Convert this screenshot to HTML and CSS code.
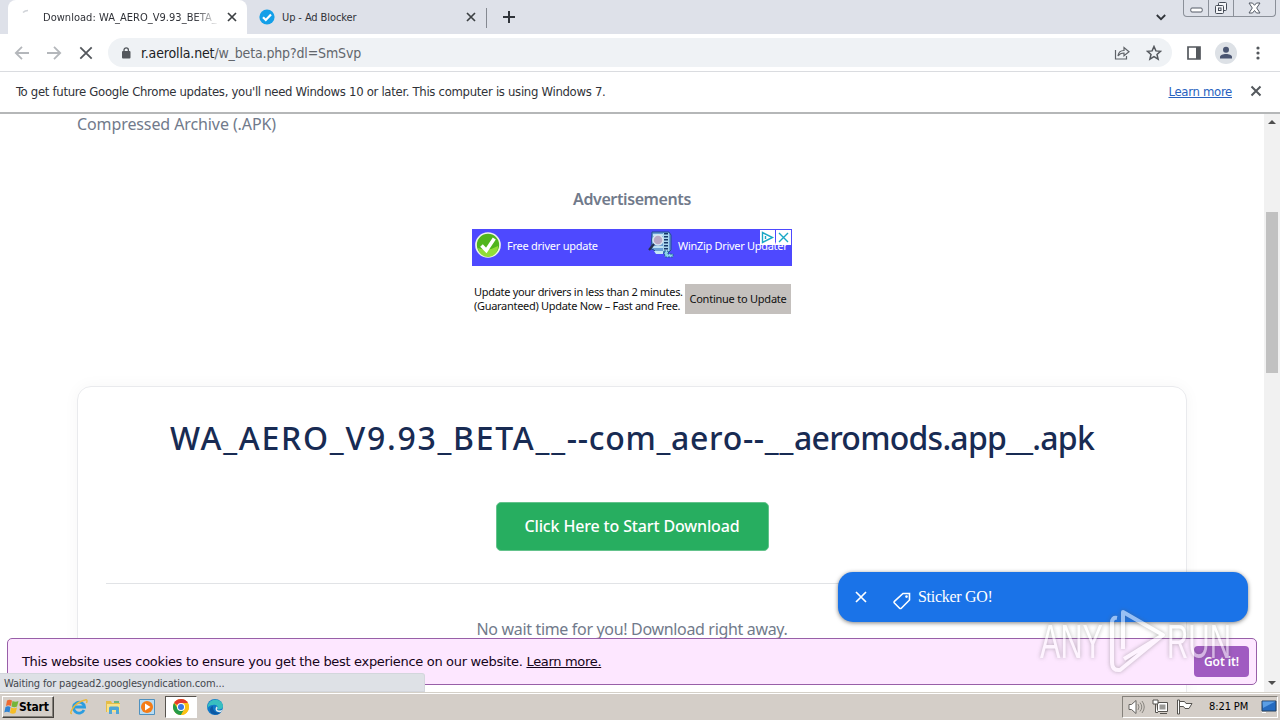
FILE: index.html
```html
<!DOCTYPE html>
<html lang="en">
<head>
    <meta charset="UTF-8">
    <title>Download: WA_AERO_V9.93_BETA__</title>
    <link rel="stylesheet" href="styles.css">
</head>
<body>

    <!-- Tabs -->
    <div class="tabstrip">
        <div class="tab active">
            <svg class="spinner" width="16" height="16" viewBox="0 0 16 16" fill="none" stroke="#d0d3d8" stroke-width="1.5"><path d="M3 3.5Q5 1.5 8 1.5"/></svg>
            <span class="tab-title fade">Download: WA_AERO_V9.93_BETA_</span>
            <svg width="10" height="10" viewBox="0 0 10 10" stroke="#3c4043" stroke-width="1.7"><path d="M1 1l8 8M9 1l-8 8"/></svg>
        </div>
        <div class="tab">
            <svg width="16" height="16" viewBox="0 0 16 16"><circle cx="8" cy="8" r="7.6" fill="#139fe8"/><path d="M4 8.2l2.8 2.8L12 5.5" fill="none" stroke="#fff" stroke-width="2.2"/></svg>
            <span class="tab-title">Up - Ad Blocker</span>
            <svg width="10" height="10" viewBox="0 0 10 10" stroke="#3c4043" stroke-width="1.7"><path d="M1 1l8 8M9 1l-8 8"/></svg>
        </div>
        <div class="tab-sep"></div>
        <svg class="new-tab" width="12" height="12" viewBox="0 0 12 12" stroke="#30343a" stroke-width="2"><path d="M6 0v12M0 6h12"/></svg>
        <svg class="tab-search" width="10" height="7" viewBox="0 0 10 7" fill="none" stroke="#30343a" stroke-width="1.8"><path d="M.8 1L5 5.2 9.2 1"/></svg>
        <div class="win-buttons">
            <span><svg width="13" height="6" viewBox="0 0 13 6"><rect x=".8" y="1" width="11.4" height="4" rx="1.2" fill="#fff" stroke="#555b66"/></svg></span>
            <span><svg width="14" height="14" viewBox="0 0 14 14" fill="#f4f5f8" stroke="#454b56"><rect x="4.5" y="1.5" width="8" height="8" rx="1"/><rect x="1.5" y="4.5" width="8" height="8" rx="1"/><rect x="4.5" y="7" width="2.5" height="2.5"/></svg></span>
            <span class="win-close"><svg width="13" height="12" viewBox="0 0 13 12"><path d="M1 1h3.5l2 2.3 2-2.3H12L8.7 6l3.3 5H8.5l-2-2.5-2 2.5H1l3.3-5z" fill="#fff" stroke="#555b66"/></svg></span>
        </div>
    </div>

    <!-- Toolbar -->
    <div class="toolbar">
        <svg width="16" height="16" viewBox="0 0 16 16" fill="none" stroke="#b4b7bb" stroke-width="1.8"><path d="M15 8H2M8 1.8L1.8 8 8 14.2"/></svg>
        <svg width="16" height="16" viewBox="0 0 16 16" fill="none" stroke="#b4b7bb" stroke-width="1.8"><path d="M1 8h13M8 1.8L14.2 8 8 14.2"/></svg>
        <svg width="16" height="16" viewBox="0 0 16 16" fill="none" stroke="#53575c" stroke-width="1.8"><path d="M2.3 2.3l11.4 11.4M13.7 2.3L2.3 13.7"/></svg>
        <div class="omnibox">
            <svg width="10" height="12" viewBox="0 0 10 12"><rect x="1" y="4" width="8.5" height="7.5" rx="1" fill="#54585d"/><path d="M3 5V3a2.2 2.2 0 014.4 0v2" fill="none" stroke="#54585d" stroke-width="1.3"/></svg>
            <span class="url"><b>r.aerolla.net</b>/w_beta.php?dl=SmSvp</span>
            <svg class="share" width="16" height="16" viewBox="0 0 16 16" fill="none" stroke="#5f6368" stroke-width="1.2"><path d="M1.5 5v9h11v-3M4 11q.5-5.5 6-5.5V2.5L15 6.700l-5 4V8Q6 8 4 11z"/></svg>
            <svg width="16" height="16" viewBox="0 0 16 16" fill="none" stroke="#54585d" stroke-width="1.5"><path d="M8 1.5l1.9 4.4 4.6.4L11 9.4l1.1 4.7L8 11.6l-4.1 2.5L5 9.4 1.5 6.3l4.6-.4z"/></svg>
        </div>
        <svg class="panel" width="14" height="14" viewBox="0 0 14 14"><path d="M1 1h12v12H1z" fill="none" stroke="#54585d" stroke-width="1.7"/><path d="M9 1h4v12H9z" fill="#54585d"/></svg>
        <svg class="avatar" width="22" height="22" viewBox="0 0 22 22"><circle cx="11" cy="11" r="11" fill="#dde1e6"/><circle cx="11" cy="7.8" r="3" fill="#4a5571"/><path d="M5 16.5v-1.5c0-4 12-4 12 0v1.5z" fill="#4a5571"/></svg>
        <svg class="dots" width="4" height="14" viewBox="0 0 4 14" fill="#54585d"><circle cx="2" cy="2" r="1.6"/><circle cx="2" cy="7" r="1.6"/><circle cx="2" cy="12" r="1.6"/></svg>
    </div>

    <!-- Update notice -->
    <div class="infobar">
        <span class="infobar-text">To get future Google Chrome updates, you'll need Windows 10 or later. This computer is using Windows 7.</span>
        <a class="infobar-link">Learn more</a>
        <svg width="12" height="12" viewBox="0 0 12 12" stroke="#54585d" stroke-width="2"><path d="M1.5 1.5l9 9M10.5 1.5l-9 9"/></svg>
    </div>

    <div class="viewport">
        <div class="page">
            <p class="filetype"><span>Compressed Archive (.APK)</span></p>
            <p class="ad-label"><span>Advertisements</span></p>
            <div class="ad">
                <div class="ad-top">
                    <svg width="28" height="28" viewBox="0 0 28 28"><circle cx="14" cy="14" r="12" fill="#50b51d" stroke="#eef4ea" stroke-width="1.7"/><path d="M4 17q10 4 20-2a10 10 0 01-20 2z" fill="#91dd38"/><path d="M7.5 14.5l4.8 5 8-12" fill="none" stroke="#fff" stroke-width="3.6"/></svg>
                    <span class="ad-free">Free driver update</span>
                    <svg class="winzip" width="28" height="28" viewBox="0 0 28 28"><path d="M5 1h17l2 3v15l-3 3H10l-3-3-3-1z" fill="#6a9ed4" stroke="#234d91"/><path d="M6 4h14M6 16h14" stroke="#bfe2f3" stroke-width="2"/><path d="M16 2h6v18h-6z" fill="#a9d6ef"/><path d="M19 2v20" stroke="#173768" stroke-width="4" stroke-dasharray="1.5 1.5"/><circle cx="11" cy="9" r="5" fill="#b8a7c4" stroke="#d9e5ee" stroke-width="1.5"/><path d="M7 13l-5 6" stroke="#26304f" stroke-width="2.2"/><path d="M7 20h9v3H9z" fill="#c4e7f6"/><path d="M17 20h4v3h5v3h-8z" fill="#8dd4e9" stroke="#2361a0" stroke-dasharray="2 1"/></svg>
                    <span class="ad-name">WinZip Driver Updater</span>
                    <div class="adchoices">
                        <svg width="15" height="15" viewBox="0 0 15 15"><path d="M0 0h15v15H0z" fill="#fff"/><path d="M2.5 2.5v10l10-5zM5.5 6v3" fill="none" stroke="#18a7c5" stroke-width="1.4"/></svg>
                        <svg width="15" height="15" viewBox="0 0 15 15"><path d="M0 0h15v15H0z" fill="#fff"/><path d="M3 3l9 9M12 3l-9 9" stroke="#18a7c5" stroke-width="1.4"/></svg>
                    </div>
                </div>
                <div class="ad-bottom">
                    <div class="ad-copy"><span>Update your drivers in less than 2 minutes.</span><br><span>(Guaranteed) Update Now – Fast and Free.</span></div>
                    <div class="ad-button"><span>Continue to Update</span></div>
                </div>
            </div>
            <div class="card">
                <h1><span class="name-version">WA_AERO_V9.93_BETA__</span><span>--com_aero--__</span><span class="name-site">aeromods.app__.apk</span></h1>
                <div class="download-btn"><span>Click Here to Start Download</span></div>
                <hr>
                <p class="wait"><span>No wait time for you! Download right away.</span></p>
            </div>

            <!-- Overlays -->
            <div class="cookie">
                <p><span class="cookie-text">This website uses cookies to ensure you get the best experience on our website.</span><a>Learn more.</a></p>
                <div class="got-it"><span>Got it!</span></div>
            </div>
            <div class="sticker">
                <svg width="12" height="12" viewBox="0 0 12 12" stroke="#fff" stroke-width="1.7"><path d="M1 1l10 10M11 1L1 11"/></svg>
                <svg class="tag" width="18" height="18" viewBox="0 0 18 18"><path d="M10 1.5h6.5V8L8.3 16.2a1.2 1.2 0 01-1.7 0L1.4 11a1.2 1.2 0 010-1.7z" fill="none" stroke="#fff" stroke-width="1.6"/><circle cx="13.5" cy="4.6" r="1.3" fill="#fff"/></svg>
                <span>Sticker GO!</span>
            </div>
            <div class="status"><span>Waiting for pagead2.googlesyndication.com...</span></div>
        </div>
        <div class="scrollbar">
            <i class="up"></i>
            <div class="thumb"></div>
            <i class="down"></i>
        </div>
    </div>

    <!-- Taskbar -->
    <div class="taskbar">
        <div class="start">
            <svg width="15" height="16" viewBox="0 0 15 16"><path d="M3 1.5q2.500-1.500 5 0L7 7q-2.500-1.300-5 0z" fill="#ee6a31"/><path d="M8.500 2q3 1.500 6 0L13 7.500q-2.500 1.500-5.500 0z" fill="#76b53a"/><path d="M1.500 8q2.500-1.300 5 0l-1 5.500q-2.500-1.500-5.200 0z" fill="#2f83d3"/><path d="M7 8.500q3 1.500 6 0L11.500 14q-2.500 1.500-5.500 0z" fill="#f6bd27"/></svg>
            <b>Start</b>
        </div>
        <div class="quick">
            <span><svg width="18" height="18" viewBox="0 0 18 18" fill="none"><path d="M14 12a5.500 5.500 0 11.500-3H5" stroke="#2b9de0" stroke-width="2.8"/><path d="M2 15.500Q-1 16 3 10T15 2q3-1 1.500 3" stroke="#e9b83b" stroke-width="1.4"/></svg></span>
            <span><svg width="17" height="16" viewBox="0 0 17 16"><path d="M1 2h5l1 2h8v9H1z" fill="#e5bd48"/><path d="M2 5h13v8H2z" fill="#f9e28a"/><path d="M4 15V9q0-1.500 1.500-1.500h7Q14 7.500 14 9v6h-3v-4H7v4z" fill="#4fa6d6"/><path d="M9 3h5" stroke="#4bad6b" stroke-width="1.5"/></svg></span>
            <span><svg width="16" height="16" viewBox="0 0 16 16"><path d="M.5.5h15v15H.5z" fill="#b8dcf3" stroke="#4f91bf"/><circle cx="8" cy="8" r="6" fill="#f47c16"/><path d="M6 4.500v7L11.500 8z" fill="#fff"/></svg></span>
            <span class="current"><svg width="16" height="16" viewBox="0 0 16 16"><circle cx="8" cy="8" r="8" fill="#fbc116"/><path d="M8 8L1.070 4A8 8 0 0114.930 4z" fill="#e33b2e"/><path d="M1.070 4A8 8 0 008 16l3.500-6H5z" fill="#259b48"/><path d="M8 4h6.930A8 8 0 018 16l3.500-6z" fill="#fbc116"/><circle cx="8" cy="8" r="4" fill="#fff"/><circle cx="8" cy="8" r="3" fill="#3978e6"/></svg></span>
            <span><svg width="16" height="16" viewBox="0 0 16 16"><circle cx="8" cy="8" r="8" fill="#1178c8"/><path d="M1 6C3-1 15-1 16 7c0 4-5 4-6 3 2-3-1-5-4-4-3 0-5 2-6 4z" fill="#38bfc0"/><path d="M6 7c-1 5 4 8 8 6-2 3-6 3-8 2C2 14 2 8 6 7z" fill="#0c59a4"/><path d="M9.500 7.500c2 1 .5 2 .5 3 1 1.500 4 1.500 6-.5l-2 3c-4 1-7-2-4.500-5.500z" fill="#e2edf0"/></svg></span>
        </div>
        <div class="tray">
            <svg width="17" height="16" viewBox="0 0 17 16" fill="#fff" stroke="#65635f"><path d="M1 5.500h2.500L8 1.500v13l-4.500-4H1z"/><path d="M10 5q2 3 0 6M12 3.500q3.500 4.500 0 9M14 2q4.500 6 0 12" fill="none" stroke="#88857f"/></svg>
            <svg width="17" height="16" viewBox="0 0 17 16" fill="#fff" stroke="#55534f"><path d="M5.500 3.500h10v9h-10z"/><path d="M7.500 5.500h6v5h-6z" fill="#9a9996" stroke="none"/><path d="M8 14.500h7M1 1h5v4H1zM3.500 5v8.500H6"/></svg>
            <svg width="17" height="16" viewBox="0 0 17 16" fill="#fff" stroke="#55534f"><path d="M1.500 1v14h2V1zM3.500 2.500h5L10 4.500h6l-3 5H9l-1.500-2h-4z"/></svg>
            <span class="clock">8:21 PM</span>
            <svg width="16" height="14" viewBox="0 0 16 14"><path d="M1 1h14v10H1z" fill="#256bc0" stroke="#24405f"/><path d="M1.500 1.500h13L2 8z" fill="#5a9ee5"/><path d="M1 12.500h4" stroke="#fff"/></svg>
        </div>
    </div>

    <!-- Watermark above everything -->
    <svg class="watermark" width="210" height="72" viewBox="0 0 210 72">
        <g fill="#fff" font-family="Liberation Sans" font-size="49">
            <text x="6" y="52" textLength="63" lengthAdjust="spacingAndGlyphs">ANY</text>
            <text x="133" y="52" textLength="64" lengthAdjust="spacingAndGlyphs">RUN</text>
        </g>
        <g fill="none" stroke="#fff" stroke-width="4" stroke-linejoin="round">
            <path d="M89 43V6l40 23-39 24M83 12q-5-1-5 5v39q0 9 8 8l43-35"/>
        </g>
    </svg>

</body>
</html>
```
FILE: styles.css
```css
* {
    box-sizing: border-box;
}

body {
    font-family: "DejaVu Sans Condensed", "DejaVu Sans", sans-serif;
    font-size: 11px;
    width: 1280px;
    height: 720px;
    margin: 0;
    display: flex;
    flex-direction: column;
    overflow: hidden;
    position: relative;
    background-color: white;
    color: #303238;
}

svg {
    display: block;
    flex: none;
}

p, h1 {
    margin: 0;
    font-weight: normal;
}

span, a, b {
    white-space: nowrap;
}

/* Browser window */
.tabstrip {
    height: 34px;
    flex: none;
    display: flex;
    background-color: #dee1e9;
    padding-left: 8px;
}

.tab {
    width: 239px;
    height: 34px;
    display: flex;
    align-items: center;
    gap: 7px;
    padding: 0 10px 0 12px;
    letter-spacing: -0.1px;
}

.tab.active {
    background-color: white;
    border-radius: 8px 8px 0 0;
    letter-spacing: 0.03px;
}

.tab-title {
    flex: 1;
    overflow: hidden;
}

.fade {
    -webkit-mask-image: linear-gradient(90deg, #000 85%, transparent);
    mask-image: linear-gradient(90deg, #000 85%, transparent);
}

.tab-sep {
    width: 1px;
    height: 20px;
    margin-top: 8px;
    background-color: #858991;
}

.new-tab {
    margin: 11px 0 0 16px;
}

.tab-search {
    margin: 14px 17px 0 auto;
}

.win-buttons {
    display: flex;
    height: 17px;
    width: 93px;
    margin-right: 4px;
    border: 1px solid #8b9099;
    border-top: 0;
    border-radius: 0 0 4px 4px;
}

.win-buttons span {
    width: 25px;
    display: flex;
    align-items: center;
    justify-content: center;
    border-right: 1px solid #8b9099;
}

.win-buttons span:first-child {
    padding-top: 4px;
}

.win-buttons .win-close {
    width: 41px;
    border-right: 0;
}

.toolbar {
    height: 38px;
    flex: none;
    display: flex;
    align-items: center;
    gap: 16px;
    padding: 0 20px 0 14px;
    border-bottom: 1px solid #dadce0;
}

.omnibox {
    width: 1064px;
    height: 29px;
    margin-left: -2px;
    display: flex;
    align-items: center;
    padding: 0 10px 0 13px;
    border-radius: 15px;
    background-color: #eff2f5;
}

.url {
    font-size: 14px;
    letter-spacing: -0.15px;
    margin-left: 10px;
    color: #62666c;
}

.url b {
    font-weight: normal;
    color: #202124;
}

.share {
    margin: 0 16px 0 auto;
}

.panel {
    margin-left: -1px;
}

.avatar {
    margin-left: -2px;
}

.dots {
    margin-left: 3px;
}

.infobar {
    height: 42px;
    flex: none;
    display: flex;
    align-items: center;
    padding: 0 18px 2px 16px;
    border-bottom: 2px solid #b5b7b8;
    font-size: 13px;
    letter-spacing: -0.31px;
}

.infobar-link {
    margin: 0 18px 0 auto;
    color: #2862c0;
    text-decoration: underline;
}

.viewport {
    height: 578px;
    flex: none;
    display: flex;
}

.page {
    width: 1264px;
    position: relative;
    overflow: hidden;
    font-family: "Noto Sans", sans-serif;
    font-size: 16px;
    color: #717a8b;
}

.filetype {
    line-height: 20px;
    padding-left: 77px;
    letter-spacing: -0.1px;
}

.ad-label {
    margin-top: 55px;
    line-height: 20px;
    text-align: center;
    font-weight: 600;
    letter-spacing: -0.4px;
}

/* Banner */
.ad {
    width: 320px;
    margin: 20px auto 0;
    font-size: 11px;
    letter-spacing: -0.3px;
    color: #111;
}

.ad-top {
    height: 37px;
    display: flex;
    align-items: center;
    padding: 0 2px 5px;
    background-color: #4e49ff;
    color: white;
    position: relative;
}

.ad-free {
    width: 140px;
    margin-left: 5px;
    letter-spacing: -0.25px;
}

.winzip {
    margin-right: 3px;
}

.adchoices {
    position: absolute;
    top: 1px;
    right: 1px;
    display: flex;
    gap: 1px;
}

.ad-bottom {
    display: flex;
    justify-content: space-between;
    padding: 18px 1px 0;
}

.ad-copy {
    padding: 1px 0 0 1px;
    line-height: 14px;
}

.ad-button {
    width: 106px;
    height: 30px;
    line-height: 30px;
    text-align: center;
    letter-spacing: -0.23px;
    background-color: #c4c0bd;
}

/* Download card */
.card {
    width: 1110px;
    height: 320px;
    margin: 72px auto 0;
    padding: 0 28px;
    border: 1px solid #e9eaed;
    border-radius: 14px;
    box-shadow: 0 0 16px rgba(0, 0, 0, 0.04);
    text-align: center;
}

h1 {
    font-size: 32px;
    line-height: 40px;
    padding-top: 31px;
    white-space: nowrap;
    font-weight: 500;
    letter-spacing: 0.7px;
    color: #182b53;
}

.name-version {
    letter-spacing: 1.74px;
}

.name-site {
    letter-spacing: -0.75px;
}

.download-btn {
    width: 273px;
    height: 49px;
    line-height: 47px;
    margin: 44px auto 0;
    border: 1px solid #64c38c;
    border-radius: 5px;
    background-color: #27ae60;
    color: white;
    font-weight: 500;
    letter-spacing: -0.15px;
}

hr {
    height: 1px;
    margin: 32px 0 0;
    border: 0;
    background-color: #e1e3e6;
}

.wait {
    line-height: 24px;
    padding-top: 33px;
    letter-spacing: -0.33px;
}

.cookie {
    position: absolute;
    left: 7px;
    top: 524px;
    width: 1250px;
    height: 47px;
    display: flex;
    align-items: center;
    justify-content: space-between;
    padding: 0 7px 0 14px;
    border: 1px solid #985fa8;
    border-radius: 5px;
    background-color: #fde7ff;
    font-family: "DejaVu Sans", sans-serif;
    font-size: 13px;
    letter-spacing: -0.32px;
    color: #15051a;
}

.cookie a {
    margin-left: 4px;
    text-decoration: underline;
}

.got-it {
    width: 55px;
    height: 31px;
    line-height: 31px;
    text-align: center;
    border-radius: 4px;
    background-color: #a05bc1;
    color: white;
    font-family: "Noto Sans", sans-serif;
    font-size: 12px;
    font-weight: 600;
    letter-spacing: -0.1px;
}

.sticker {
    position: absolute;
    left: 838px;
    top: 458px;
    width: 410px;
    height: 50px;
    display: flex;
    align-items: center;
    padding: 0 0 1px 17px;
    border-radius: 15px;
    background-color: #1a73e8;
    box-shadow: 0 1px 4px rgba(0, 0, 0, 0.5);
    color: white;
    font-family: "Liberation Serif", serif;
    letter-spacing: -0.3px;
}

.tag {
    margin: 8px 7px 0 26px;
}

.status {
    position: absolute;
    left: 0;
    bottom: 0;
    width: 425px;
    height: 19px;
    line-height: 19px;
    padding-left: 4px;
    border: 1px solid #d3d6dc;
    border-left: 0;
    border-radius: 0 3px 0 0;
    background-color: #dee1e6;
    font-family: "DejaVu Sans Condensed", sans-serif;
    font-size: 11px;
    letter-spacing: -0.16px;
    color: #44474d;
}

.scrollbar {
    width: 16px;
    display: flex;
    flex-direction: column;
    align-items: center;
    background-color: #f1f1f1;
}

.scrollbar i {
    width: 8px;
    height: 4px;
    background-color: #4e4e4e;
}

.up {
    margin-top: 6px;
    clip-path: polygon(50% 0, 100% 100%, 0 100%);
}

.thumb {
    width: 12px;
    height: 161px;
    margin: 88px 0 auto;
    background-color: #c1c1c1;
}

.down {
    margin-bottom: 7px;
    clip-path: polygon(0 0, 100% 0, 50% 100%);
}

/* Windows taskbar */
.taskbar {
    height: 28px;
    flex: none;
    display: flex;
    align-items: center;
    padding: 2px;
    border-top: 1px solid #d4d0c8;
    box-shadow: inset 0 1px white;
    background-color: #d4cec8;
    color: black;
}

.start {
    width: 52px;
    height: 22px;
    display: flex;
    align-items: center;
    padding-left: 1px;
    border: 1px solid;
    border-color: white #45423e #45423e white;
    box-shadow: inset -1px -1px #85817b;
    font-size: 12px;
    letter-spacing: -0.2px;
}

.quick {
    display: flex;
    margin-left: 8px;
}

.quick span {
    width: 34px;
    height: 22px;
    display: flex;
    align-items: center;
    justify-content: center;
}

.quick .current {
    width: 32px;
    margin: 0 1px;
    background-color: white;
    border: 1px solid;
    border-color: #57534e white white #57534e;
}

.tray {
    width: 156px;
    height: 22px;
    margin-left: auto;
    display: flex;
    align-items: center;
    gap: 7px;
    padding: 0 0 0 5px;
    border: 1px solid;
    border-color: #85817b white white #85817b;
}

.clock {
    width: 41px;
    margin: 0 4px 0 9px;
    letter-spacing: -0.1px;
}

.watermark {
    position: absolute;
    left: 1034px;
    top: 606px;
    opacity: 0.55;
    filter: drop-shadow(0 0 2px rgba(90, 90, 90, 0.8));
}
```
